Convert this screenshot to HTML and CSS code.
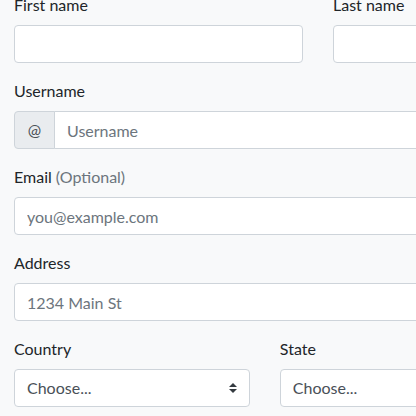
FILE: index.html
```html
<!DOCTYPE html>
<html lang="en">
<head>
<meta charset="utf-8">
<title>Checkout form</title>
<link rel="stylesheet" href="styles.css">
</head>
<body>
<div class="page">
  <form class="form">
    <div class="row">
      <div class="col col-6 field">
        <label class="label" for="firstName">First name</label>
        <input class="control" id="firstName" type="text">
      </div>
      <div class="col col-6 field">
        <label class="label" for="lastName">Last name</label>
        <input class="control" id="lastName" type="text">
      </div>
    </div>

    <div class="field">
      <label class="label" for="username">Username</label>
      <div class="group">
        <span class="addon">@</span>
        <input class="control group-control" id="username" type="text" placeholder="Username">
      </div>
    </div>

    <div class="field">
      <label class="label" for="email">Email <span class="muted">(Optional)</span></label>
      <input class="control" id="email" type="email" placeholder="you@example.com">
    </div>

    <div class="field">
      <label class="label" for="address">Address</label>
      <input class="control" id="address" type="text" placeholder="1234 Main St">
    </div>

    <div class="row">
      <div class="col col-5 field">
        <label class="label" for="country">Country</label>
        <div class="select-wrap">
          <select class="control select" id="country">
            <option>Choose...</option>
            <option>United States</option>
          </select>
          <svg class="arrows" width="8" height="10" viewBox="0 0 4 5" aria-hidden="true"><path fill="#343a40" d="M2 0L0 2h4zm0 5L0 3h4z"/></svg>
        </div>
      </div>
      <div class="col col-4 field">
        <label class="label" for="state">State</label>
        <div class="select-wrap">
          <select class="control select" id="state">
            <option>Choose...</option>
            <option>California</option>
          </select>
          <svg class="arrows" width="8" height="10" viewBox="0 0 4 5" aria-hidden="true"><path fill="#343a40" d="M2 0L0 2h4zm0 5L0 3h4z"/></svg>
        </div>
      </div>
    </div>
  </form>
</div>
</body>
</html>
```
FILE: styles.css
```css
html, body {
  margin: 0;
  padding: 0;
  overflow: hidden;
}

body {
  background: #f8f9fa;
  color: #212529;
  font-family: Lato, "Liberation Sans", sans-serif;
  font-size: 16px;
  line-height: 24px;
}

.page {
  padding-left: 14px;
  margin-top: -7px;
  width: 608px;
}

.form {
  display: flex;
  flex-direction: column;
}

.row {
  display: flex;
  margin: 0 -15px;
}

.col {
  box-sizing: border-box;
  padding: 0 15px;
  flex: 0 0 auto;
}

.col-6 { width: 50%; }
.col-5 { width: 41.6667%; }
.col-4 { width: 33.3333%; }

.field {
  display: flex;
  flex-direction: column;
  margin-bottom: 16px;
}

.label {
  display: block;
  margin-bottom: 8px;
  height: 24px;
  white-space: nowrap;
}

.muted {
  color: #6c757d;
}

.control {
  box-sizing: border-box;
  display: block;
  width: 100%;
  height: 38px;
  margin: 0;
  padding: 6px 12px;
  font-family: inherit;
  font-size: 16px;
  line-height: 24px;
  color: #495057;
  background: #fff;
  border: 1px solid #ced4da;
  border-radius: 4px;
  outline: none;
}

.control::placeholder {
  color: #6c757d;
  opacity: 1;
}

.group {
  display: flex;
  width: 100%;
}

.addon {
  box-sizing: border-box;
  display: flex;
  align-items: center;
  justify-content: center;
  width: 41px;
  height: 38px;
  flex: 0 0 auto;
  color: #495057;
  background: #e9ecef;
  border: 1px solid #ced4da;
  border-radius: 4px 0 0 4px;
}

.group-control {
  flex: 1 1 auto;
  width: 1%;
  margin-left: -1px;
  border-radius: 0 4px 4px 0;
}

.select-wrap {
  position: relative;
}

.select {
  -webkit-appearance: none;
  appearance: none;
  padding-right: 28px;
}

.arrows {
  position: absolute;
  right: 13px;
  top: 14px;
  pointer-events: none;
}
```
